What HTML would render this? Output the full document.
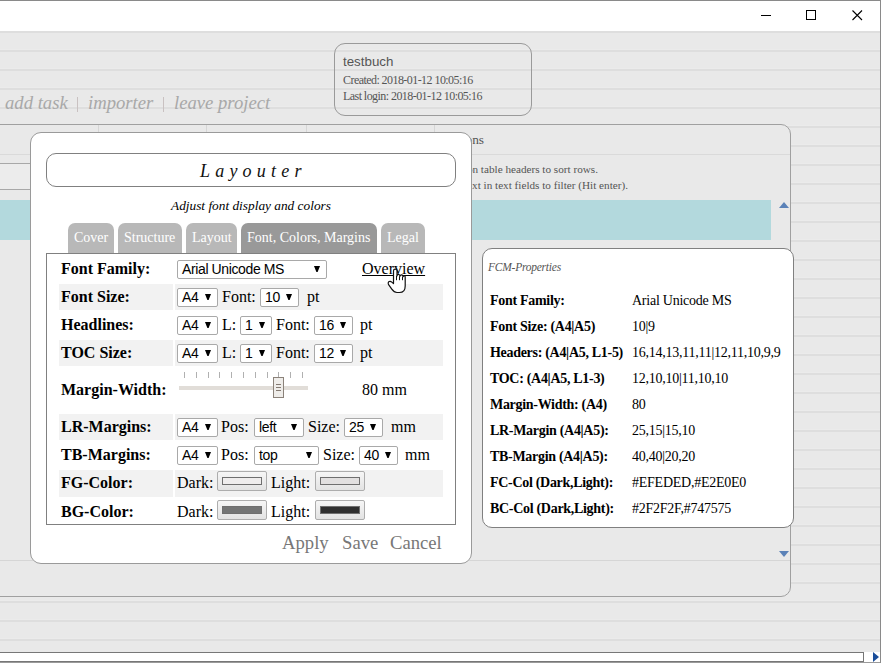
<!DOCTYPE html>
<html><head><meta charset="utf-8">
<style>
*{box-sizing:border-box;margin:0;padding:0}
html,body{width:881px;height:663px;overflow:hidden;background:#fff}
body{position:relative;font-family:"Liberation Serif",serif;color:#000}
.a{position:absolute}
.t{position:absolute;white-space:nowrap;line-height:1}
.sans{font-family:"Liberation Sans",sans-serif}
#page{left:0;top:31px;width:880px;height:621px;background-color:#e9e9e9;
 background-image:repeating-linear-gradient(to bottom,#dedede 0px,#dedede 2px,#e9e9e9 2px,#e9e9e9 18px,#ebebeb 18px,#ebebeb 19px)}
.sel{position:absolute;height:19px;border:1px solid #a9a9a9;border-radius:2px;background:#fff;
 font:14px "Liberation Sans",sans-serif;letter-spacing:-0.38px;line-height:17.5px;padding-left:4px;color:#000;white-space:nowrap}
.sel:after{content:"";position:absolute;right:6px;top:5px;width:6px;height:6px;background:#000;clip-path:polygon(0 0,100% 0,60% 100%,40% 100%)}
.lbl{position:absolute;font:bold 16px "Liberation Serif",serif;line-height:1;white-space:nowrap}
.v{position:absolute;font:16px "Liberation Serif",serif;line-height:1;white-space:nowrap}
.rowbg{position:absolute;background:#f2f2f2;height:26px}
.cbtn{position:absolute;width:50px;height:20px;border:1px solid #adadad;border-radius:2px;background:linear-gradient(#f6f6f6,#e3e3e3)}
.cbtn i{position:absolute;left:4px;top:5px;width:40px;height:8px;border:1px solid #6f6f6f}
.tab{position:absolute;top:223px;height:30px;background:#b8b8b8;border-radius:7px 7px 0 0;color:#fff;font:14px "Liberation Serif",serif;line-height:1}
.tab span{position:absolute;top:8px;left:6px}
.pl{position:absolute;font:bold 14px "Liberation Serif",serif;letter-spacing:-0.3px;line-height:1;white-space:nowrap}
.pv{position:absolute;font:14px "Liberation Serif",serif;letter-spacing:-0.25px;line-height:1;white-space:nowrap}
</style></head><body>

<!-- title bar -->
<div class="a" style="left:0;top:0;width:881px;height:1px;background:#8a8a8a"></div>
<div class="a" style="left:880px;top:0;width:1px;height:663px;background:#8a8a8a;z-index:5"></div>
<div class="a" style="left:761px;top:15px;width:10px;height:1px;background:#000"></div>
<div class="a" style="left:806px;top:10px;width:10px;height:10px;border:1px solid #000"></div>
<svg class="a" style="left:851px;top:9px" width="13" height="13" viewBox="0 0 13 13"><path d="M1.5 1.5L11 11M11 1.5L1.5 11" stroke="#000" stroke-width="1.1"/></svg>

<!-- page -->
<div id="page" class="a"></div>

<!-- testbuch box -->
<div class="a" style="left:334px;top:43px;width:198px;height:73px;border:1px solid #9a9a9a;border-radius:11px"></div>
<div class="t sans" style="left:343px;top:55px;font-size:13.333px;color:#555">testbuch</div>
<div class="t" style="left:343px;top:74px;font-size:12px;letter-spacing:-0.56px;color:#555">Created: 2018-01-12 10:05:16</div>
<div class="t" style="left:343px;top:90px;font-size:12px;letter-spacing:-0.56px;color:#555">Last login: 2018-01-12 10:05:16</div>

<!-- menu -->
<div class="t" style="left:5px;top:94px;font-size:18.667px;font-style:italic;color:#a8a8a8">add task</div>
<div class="a" style="left:77px;top:97px;width:1px;height:15px;background:#c9c1c1"></div>
<div class="t" style="left:88px;top:94px;font-size:18.667px;font-style:italic;color:#a8a8a8">importer</div>
<div class="a" style="left:163px;top:97px;width:1px;height:15px;background:#c9c1c1"></div>
<div class="t" style="left:174px;top:94px;font-size:18.667px;font-style:italic;color:#a8a8a8">leave project</div>

<!-- background panel -->
<div class="a" style="left:-20px;top:124px;width:811px;height:473px;border:1px solid #a0a0a0;border-radius:10px;background:#e9e9e9;overflow:hidden">
  <div class="a" style="left:117px;top:0;width:1px;height:30px;background:#d6d6d6"></div>
  <div class="a" style="left:225px;top:0;width:1px;height:30px;background:#d6d6d6"></div>
  <div class="a" style="left:325px;top:0;width:1px;height:30px;background:#d6d6d6"></div>
  <div class="a" style="left:453px;top:0;width:1px;height:30px;background:#d6d6d6"></div>
  <div class="a" style="left:0;top:29px;width:811px;height:1px;background:#dadada"></div>
  <div class="a" style="left:0;top:38px;width:200px;height:27px;border-top:1px solid #a8a8a8;border-bottom:1px solid #a8a8a8;background:#ececec"></div>
  <div class="a" style="left:0;top:75px;width:790px;height:40px;background:#b3d9dd"></div>
  <div class="a" style="left:0;top:435px;width:811px;height:1px;background:#d6d6d6"></div>
</div>
<div class="t" style="right:397px;top:133px;font-size:13.333px;color:#555">Descriptions</div>
<div class="t" style="right:283px;top:164px;font-size:11.2px;color:#555">Click on table headers to sort rows.</div>
<div class="t" style="right:253px;top:180px;font-size:11.2px;color:#555">Enter text in text fields to filter (Hit enter).</div>
<svg class="a" style="left:779px;top:202px" width="10" height="6"><path d="M0 6L5 0L10 6Z" fill="#5b82b8"/></svg>
<svg class="a" style="left:779px;top:551px" width="10" height="6"><path d="M0 0L10 0L5 6Z" fill="#5b82b8"/></svg>

<!-- bottom scrollbar -->
<div class="a" style="left:0;top:652px;width:880px;height:11px;background:#fff"></div>
<div class="a" style="left:-5px;top:652px;width:869px;height:10px;border:1px solid #777;background:#fff"></div>
<div class="a" style="left:0;top:662px;width:881px;height:1px;background:#9a9a9a"></div>
<svg class="a" style="left:873px;top:652px" width="6" height="10"><path d="M0 0L6 5L0 10Z" fill="#1a4d9a"/></svg>

<!-- dialog -->
<div class="a" style="left:30px;top:132px;width:442px;height:432px;border:1px solid #9a9a9a;border-radius:11px;background:#fff"></div>
<div class="a" style="left:46px;top:153px;width:410px;height:34px;border:1px solid #808080;border-radius:10px"></div>
<div class="t" style="left:200px;top:162px;font-size:18px;font-style:italic;letter-spacing:5.2px;color:#111">Layouter</div>
<div class="t" style="left:171px;top:199px;font-size:13.333px;font-style:italic">Adjust font display and colors</div>

<div class="tab" style="left:68px;width:46px"><span>Cover</span></div>
<div class="tab" style="left:118px;width:64px"><span>Structure</span></div>
<div class="tab" style="left:186px;width:51px"><span>Layout</span></div>
<div class="tab" style="left:241px;width:136px;background:#999"><span>Font, Colors, Margins</span></div>
<div class="tab" style="left:381px;width:44px"><span>Legal</span></div>

<div class="a" style="left:46px;top:253px;width:410px;height:272px;border:1px solid #808080;background:#fff"></div>

<!-- rows -->
<div class="rowbg" style="left:59px;top:284px;width:114px"></div><div class="rowbg" style="left:175px;top:284px;width:268px"></div>
<div class="rowbg" style="left:59px;top:340px;width:114px"></div><div class="rowbg" style="left:175px;top:340px;width:268px"></div>
<div class="rowbg" style="left:59px;top:414px;width:114px"></div><div class="rowbg" style="left:175px;top:414px;width:268px"></div>
<div class="rowbg" style="left:59px;top:470px;width:114px;height:27px"></div><div class="rowbg" style="left:175px;top:470px;width:268px;height:27px"></div>

<div class="lbl" style="left:61px;top:261px">Font Family:</div>
<div class="lbl" style="left:61px;top:289px">Font Size:</div>
<div class="lbl" style="left:61px;top:317px">Headlines:</div>
<div class="lbl" style="left:61px;top:345px">TOC Size:</div>
<div class="lbl" style="left:61px;top:382px">Margin-Width:</div>
<div class="lbl" style="left:61px;top:419px">LR-Margins:</div>
<div class="lbl" style="left:61px;top:447px">TB-Margins:</div>
<div class="lbl" style="left:61px;top:475px">FG-Color:</div>
<div class="lbl" style="left:61px;top:504px">BG-Color:</div>

<!-- row1 -->
<div class="sel" style="left:177px;top:260px;width:150px">Arial Unicode MS</div>
<div class="v" style="left:362px;top:261px;text-decoration:underline">Overview</div>
<!-- row2 -->
<div class="sel" style="left:177px;top:288px;width:41px">A4</div>
<div class="v" style="left:222px;top:289px">Font:</div>
<div class="sel" style="left:260px;top:288px;width:39px">10</div>
<div class="v" style="left:307px;top:289px">pt</div>
<!-- row3 -->
<div class="sel" style="left:177px;top:316px;width:41px">A4</div>
<div class="v" style="left:222px;top:317px">L:</div>
<div class="sel" style="left:240px;top:316px;width:32px">1</div>
<div class="v" style="left:276px;top:317px">Font:</div>
<div class="sel" style="left:314px;top:316px;width:39px">16</div>
<div class="v" style="left:360px;top:317px">pt</div>
<!-- row4 -->
<div class="sel" style="left:177px;top:344px;width:41px">A4</div>
<div class="v" style="left:222px;top:345px">L:</div>
<div class="sel" style="left:240px;top:344px;width:32px">1</div>
<div class="v" style="left:276px;top:345px">Font:</div>
<div class="sel" style="left:314px;top:344px;width:39px">12</div>
<div class="v" style="left:360px;top:345px">pt</div>
<!-- row5 slider -->
<svg class="a" style="left:175px;top:368px" width="140" height="44">
 <g stroke="#b0b0b0" stroke-width="1">
  <path d="M9.5 4V10M21.5 4V10M33.5 4V10M44.5 4V10M56.5 4V10M68.5 4V10M80.5 4V10M92.5 4V10M103.5 4V10M115.5 4V10M127.5 4V10"/>
 </g>
 <rect x="4" y="18" width="129" height="4" fill="#e1ddd8"/>
 <rect x="98.5" y="9.5" width="10" height="20" fill="#efedea" stroke="#8b827a"/>
 <path d="M101 16.5H106M101 19.5H106M101 22.5H106" stroke="#847a72"/>
</svg>
<div class="v" style="left:362px;top:382px">80 mm</div>
<!-- row6 -->
<div class="sel" style="left:177px;top:418px;width:41px">A4</div>
<div class="v" style="left:221px;top:419px">Pos:</div>
<div class="sel" style="left:254px;top:418px;width:50px">left</div>
<div class="v" style="left:308px;top:419px">Size:</div>
<div class="sel" style="left:344px;top:418px;width:39px">25</div>
<div class="v" style="left:391px;top:419px">mm</div>
<!-- row7 -->
<div class="sel" style="left:177px;top:446px;width:41px">A4</div>
<div class="v" style="left:221px;top:447px">Pos:</div>
<div class="sel" style="left:254px;top:446px;width:65px">top</div>
<div class="v" style="left:323px;top:447px">Size:</div>
<div class="sel" style="left:359px;top:446px;width:39px">40</div>
<div class="v" style="left:405px;top:447px">mm</div>
<!-- row8 -->
<div class="v" style="left:177px;top:475px">Dark:</div>
<div class="cbtn" style="left:217px;top:471px"><i style="background:#efeded"></i></div>
<div class="v" style="left:271px;top:475px">Light:</div>
<div class="cbtn" style="left:315px;top:471px"><i style="background:#e2e0e0"></i></div>
<!-- row9 -->
<div class="v" style="left:177px;top:504px">Dark:</div>
<div class="cbtn" style="left:217px;top:500px"><i style="background:#747575"></i></div>
<div class="v" style="left:271px;top:504px">Light:</div>
<div class="cbtn" style="left:315px;top:500px"><i style="background:#2f2f2f"></i></div>

<!-- buttons -->
<div class="t" style="left:282px;top:534px;font-size:18.667px;color:#777">Apply</div>
<div class="t" style="left:342px;top:534px;font-size:18.667px;color:#777">Save</div>
<div class="t" style="left:390px;top:534px;font-size:18.667px;color:#777">Cancel</div>

<!-- FCM panel -->
<div class="a" style="left:482px;top:248px;width:312px;height:280px;border:1px solid #808080;border-radius:10px;background:#fff"></div>
<div class="t" style="left:488px;top:262px;font-size:11.5px;letter-spacing:-0.24px;font-style:italic;color:#555">FCM-Properties</div>
<div class="pl" style="left:490px;top:294px">Font Family:</div><div class="pv" style="left:632px;top:294px">Arial Unicode MS</div>
<div class="pl" style="left:490px;top:320px">Font Size: (A4|A5)</div><div class="pv" style="left:632px;top:320px">10|9</div>
<div class="pl" style="left:490px;top:346px">Headers: (A4|A5, L1-5)</div><div class="pv" style="left:632px;top:346px">16,14,13,11,11|12,11,10,9,9</div>
<div class="pl" style="left:490px;top:372px">TOC: (A4|A5, L1-3)</div><div class="pv" style="left:632px;top:372px">12,10,10|11,10,10</div>
<div class="pl" style="left:490px;top:398px">Margin-Width: (A4)</div><div class="pv" style="left:632px;top:398px">80</div>
<div class="pl" style="left:490px;top:424px">LR-Margin (A4|A5):</div><div class="pv" style="left:632px;top:424px">25,15|15,10</div>
<div class="pl" style="left:490px;top:450px">TB-Margin (A4|A5):</div><div class="pv" style="left:632px;top:450px">40,40|20,20</div>
<div class="pl" style="left:490px;top:476px">FC-Col (Dark,Light):</div><div class="pv" style="left:632px;top:476px">#EFEDED,#E2E0E0</div>
<div class="pl" style="left:490px;top:502px">BC-Col (Dark,Light):</div><div class="pv" style="left:632px;top:502px">#2F2F2F,#747575</div>

<!-- cursor -->
<svg class="a" style="left:384px;top:264px" width="26" height="32" viewBox="0 0 26 32">
 <path d="M9.5 19.5V6.8A1.75 1.75 0 0 1 13 6.8V11.8A1.5 1.5 0 0 1 16 12.2A1.5 1.5 0 0 1 19 12.7A1.1 1.1 0 0 1 21.2 13.6V22C21.2 26 19 28.5 15.5 28.5H13C10.8 28.5 9.2 27.2 7.8 25.2L4.6 20.6C3.9 19.6 4.1 18.2 5.1 17.6C6 17.1 7 17.4 7.8 18.1L9.5 19.6Z" fill="#fff" stroke="#111" stroke-width="1.2" stroke-linejoin="round"/>
 <path d="M12.5 11.8V16.2M15.5 12.2V16.2M18.5 12.7V16.2" stroke="#111" stroke-width="1"/>
</svg>

</body></html>
